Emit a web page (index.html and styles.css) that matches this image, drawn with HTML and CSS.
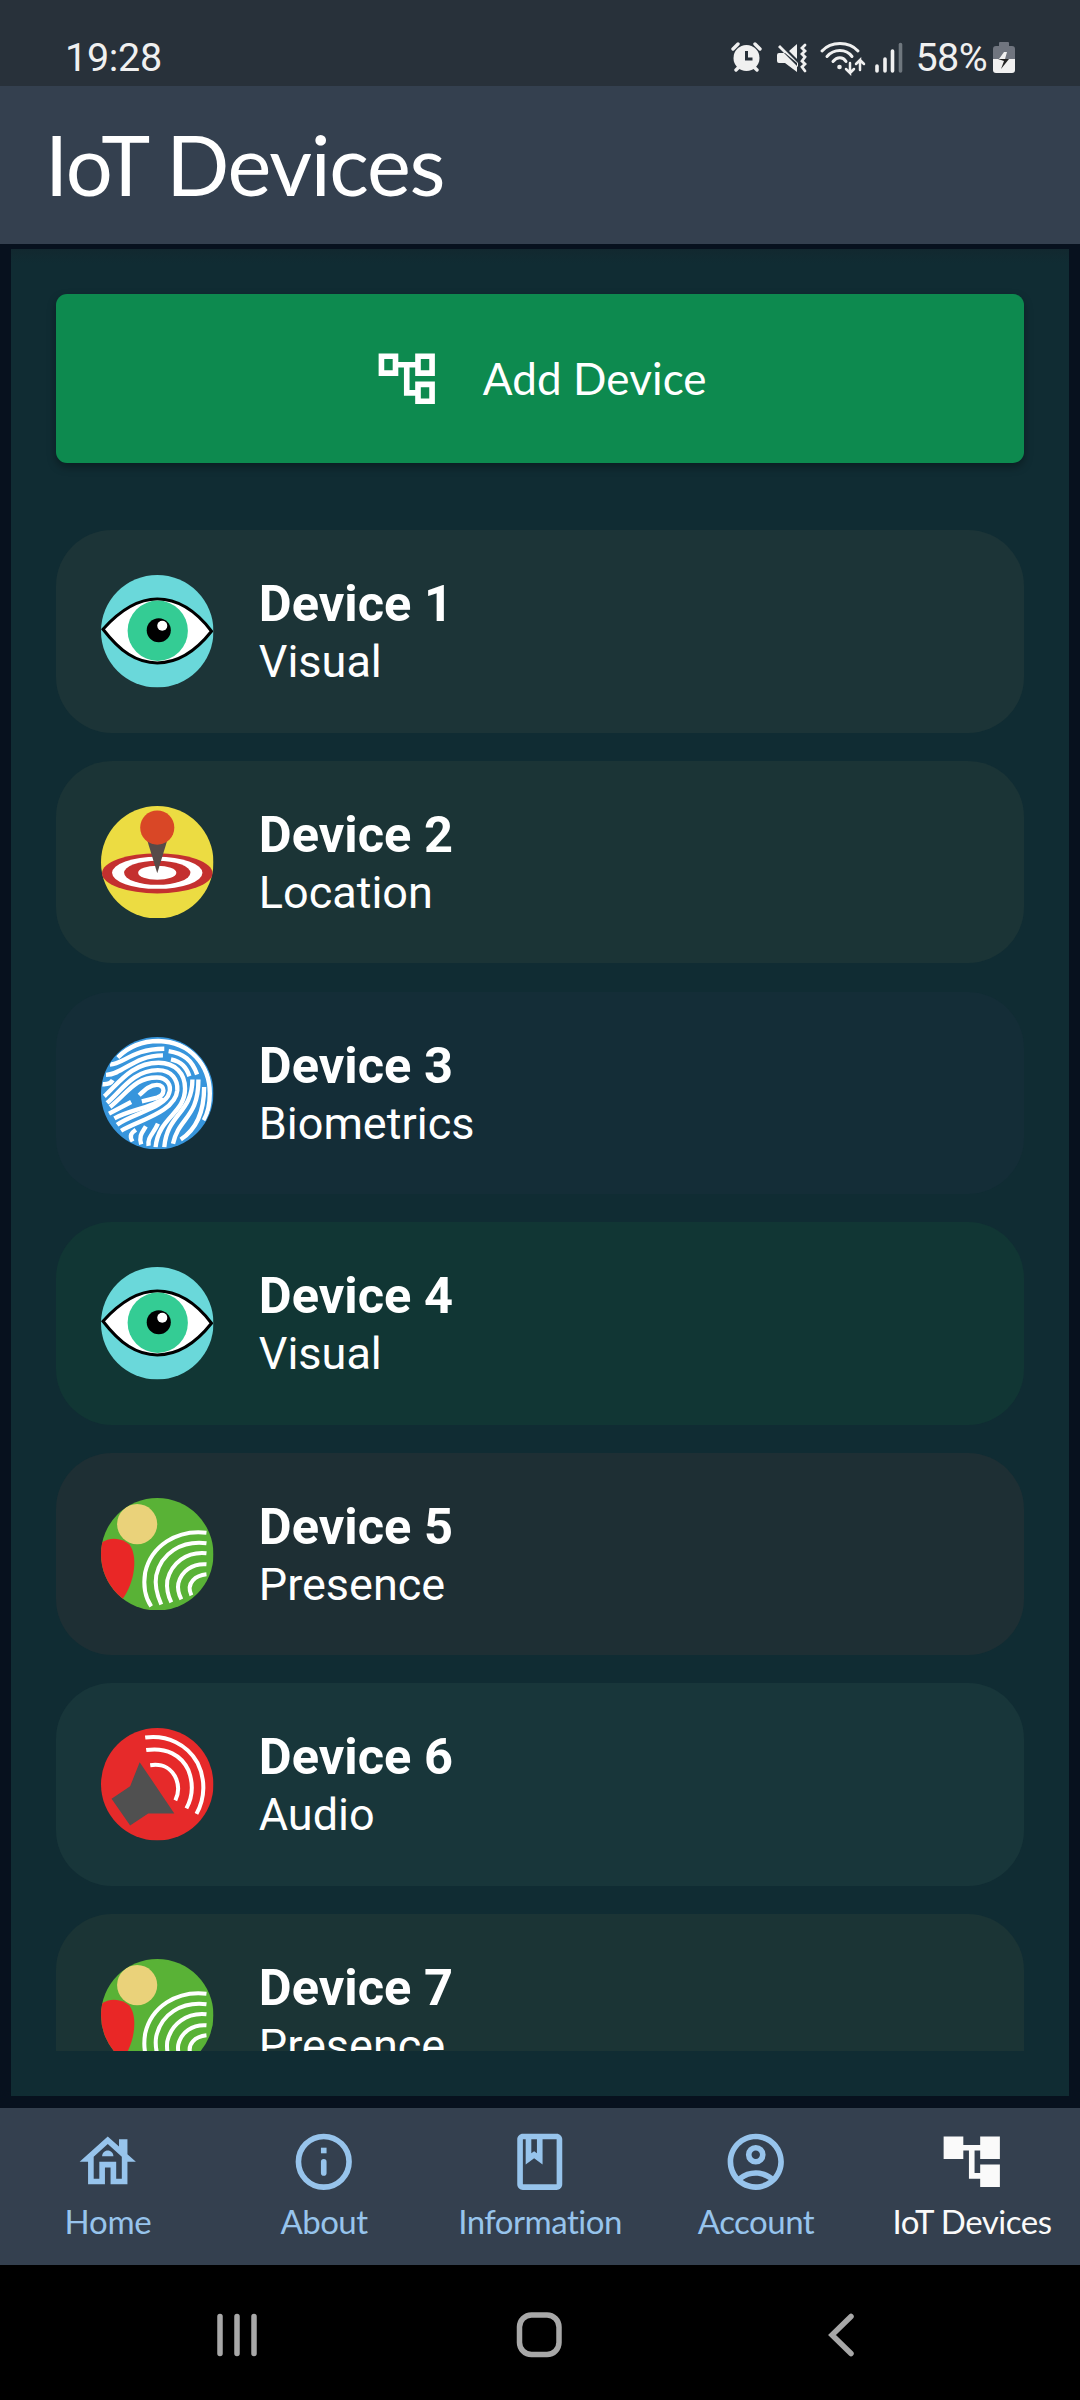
FILE: index.html
```html
<!DOCTYPE html>
<html lang="en">
<head>
<meta charset="utf-8">
<title>IoT Devices</title>
<link rel="stylesheet" href="styles.css">
</head>
<body>
<svg class="defs" aria-hidden="true">
  <defs>
    <clipPath id="disc"><circle cx="56" cy="56" r="56"/></clipPath>
    <clipPath id="print"><circle cx="186" cy="189" r="166"/></clipPath>
    <symbol id="eye" viewBox="0 0 112 112">
      <circle cx="56" cy="56" r="56" fill="#6ad8da"/>
      <path d="M2 54C21 33 38 24 56 24c20 0 38 11 54 32C95 75 77 87.500 56 87.500S19 76 2 54z" fill="#fff" stroke="#000" stroke-width="3"/>
      <circle cx="56.500" cy="55.500" r="30" fill="#34cc94"/>
      <circle cx="57.500" cy="55" r="12" fill="#000"/>
      <circle cx="61" cy="50.500" r="5" fill="#fff"/>
    </symbol>
    <symbol id="pin" viewBox="0 0 112 112">
      <circle cx="56" cy="56" r="56" fill="#ecdc42"/>
      <ellipse cx="56" cy="67" rx="55" ry="20" fill="#c4302f"/>
      <ellipse cx="56" cy="66.500" rx="45" ry="16" fill="#fff"/>
      <ellipse cx="56" cy="66.500" rx="33" ry="12" fill="#c4302f"/>
      <ellipse cx="56" cy="66.500" rx="19" ry="7" fill="#fff"/>
      <path d="M46 34l10 33 10-33z" fill="#574b49"/>
      <circle cx="56" cy="21.500" r="17" fill="#d94726"/>
    </symbol>
    <symbol id="finger" viewBox="18 21 336 336">
      <circle cx="186" cy="189" r="168" fill="#3795dc"/>
      <g clip-path="url(#print)" fill="none" stroke="#fff" stroke-width="13">
        <path d="M68 82C100 50 145 33 190 33C285 36 343 105 343 190C343 225 336 250 325 270"/>
        <path d="M45 103C85 103 110 56 207 56M33 134C85 133 115 76 203 76"/>
        <path d="M220 63C265 70 290 90 305 133M227 88C258 95 272 110 282 138"/>
        <path d="M22 162Q45 164 53 150"/>
        <path d="M28 198C70 160 110 98 190 98C240 98 269 130 269 175C269 250 190 260 181 350"/>
        <path d="M36 218C80 180 115 120 188 120C230 120 248 150 246 180C240 245 130 270 78 301"/>
        <path d="M45 230C100 185 120 142 185 142C215 142 229 165 222 187C212 232 110 250 66 283"/>
        <path d="M42 250L108 215M58 264C100 240 170 232 204 205"/>
        <path d="M132 195C150 178 165 164 185 164C212 164 210 195 185 202L140 213"/>
        <path d="M291 148C291 250 215 250 207 350M309 148C309 265 250 260 233 340M326 170C326 240 305 295 256 327"/>
        <path d="M112 333C102 315 108 308 122 298M138 342C130 315 142 305 152 288M160 346C156 320 175 310 188 280"/>
      </g>
    </symbol>
    <symbol id="presence" viewBox="0 0 112 112">
      <circle cx="56" cy="56" r="56" fill="#59b236"/>
      <g clip-path="url(#disc)">
        <path d="M0 45C9 38 21 40 28 46c9 11 6 38-7 55H0z" fill="#e92726"/>
        <circle cx="36" cy="26" r="20" fill="#ead27a"/>
      </g>
      <path d="M105 34.500C75 31 50 48 44 74c-2 12 0 25 6 34M105 45C80 42 60 55 55 77c-2 11 1 20 5 29M105 55C85 53 70 65 66 82c-1 8 0 14 4 22M105 66C91 65 80 73 77 85c-1 5 0 10 3 16M105 76C95 77 84 84 90 97" fill="none" stroke="#fff" stroke-width="4"/>
    </symbol>
    <symbol id="audio" viewBox="0 0 112 112">
      <circle cx="56" cy="56" r="56" fill="#e62a2a"/>
      <path d="M38.500 34L73 85H47L29 97 10.500 70.500 29 58z" fill="#505050"/>
      <path d="M44 9.500c22-3 42 7 52 25 8 16 8 35-1 51M45 22c20-3 35 5 42 20 5 13 4 27-2 38M49 37c13-2 22 4 26 14 3 8 2 15-1 21" fill="none" stroke="#fff" stroke-width="4"/>
    </symbol>
  </defs>
</svg>
<div class="screen">
  <header class="status">
    <span class="clock">19:28</span>
    <svg class="status-icons" viewBox="0 0 175 40" fill="#f0f0f0">
      <g transform="translate(0 1)">
        <circle cx="15.500" cy="18" r="13"/>
        <path d="M2 9l5-5M29 9l-5-5M5 30l3-3M26 30l-3-3" stroke="#f0f0f0" stroke-width="3.400" stroke-linecap="round"/>
        <path d="M15.500 11v8h6" fill="none" stroke="#28313a" stroke-width="3"/>
      </g>
      <path d="M48 14q-2 0-2 2v6q0 2 2 2h6l12 9V24L54 14zM47 8l2-2 18 18v4zM58 12l8-7v15z"/>
      <path d="M74 6l-3 3 3 3-3 3 3 3-3 4 3 3-3 3 3 4" fill="none" stroke="#f0f0f0" stroke-width="2.800" stroke-linecap="round"/>
      <g fill="none" stroke="#f0f0f0" stroke-width="3" stroke-linecap="round">
        <path d="M91 12c9-10 27-10 36 0M96 17.500c7-8 19-8 25 0M102 22.500c4-5 10-5 13 0"/>
        <path d="M119 24v10l-4-4M119 34l4-4M129 31V21l-4 4M129 21l4 4" stroke-width="2.500"/>
        <path d="M146 27v5M154 20v12M161.500 12v20" stroke-width="3.600"/>
        <path d="M169.500 5.500V32" stroke-width="3.600" stroke="#6f777e"/>
      </g>
      <circle cx="108.500" cy="28" r="2.300"/>
    </svg>
    <span class="percent">58%</span>
    <svg class="battery" viewBox="0 0 22 32">
      <path d="M6 1q0-1 1-1h8q1 0 1 1v3h3q3 0 3 3v10H0V7q0-3 3-3h3z" fill="#70757f"/>
      <path d="M0 17h22v11q0 3-3 3H3q-3 0-3-3z" fill="#f0f0f0"/>
      <path d="M11 10h3l-2 7H6z" fill="#f0f0f0"/>
      <path d="M5 17h11l-8 10 3-8z" fill="#222"/>
    </svg>
  </header>
  <h1 class="appbar"><span>IoT Devices</span></h1>
  <main class="panel">
    <button class="add">
      <svg class="icon" viewBox="0 0 24 24"><path fill-rule="evenodd" d="M22 11V3h-7v3H9V3H2v8h7V8h2v10h4v3h7v-8h-7v3h-2V8h2v3h7zM7 9H4V5h3v4zm10 6h3v4h-3v-4zm0-10h3v4h-3V5z"/></svg>
      <span>Add Device</span>
    </button>
    <ul class="list">
      <li class="card c1"><svg class="avatar"><use href="#eye"/></svg><div class="label"><h2>Device 1</h2><p>Visual</p></div></li>
      <li class="card c2"><svg class="avatar"><use href="#pin"/></svg><div class="label"><h2>Device 2</h2><p>Location</p></div></li>
      <li class="card c3"><svg class="avatar"><use href="#finger"/></svg><div class="label"><h2>Device 3</h2><p>Biometrics</p></div></li>
      <li class="card c4"><svg class="avatar"><use href="#eye"/></svg><div class="label"><h2>Device 4</h2><p>Visual</p></div></li>
      <li class="card c5"><svg class="avatar"><use href="#presence"/></svg><div class="label"><h2>Device 5</h2><p>Presence</p></div></li>
      <li class="card c6"><svg class="avatar"><use href="#audio"/></svg><div class="label"><h2>Device 6</h2><p>Audio</p></div></li>
      <li class="card c7"><svg class="avatar"><use href="#presence"/></svg><div class="label"><h2>Device 7</h2><p>Presence</p></div></li>
    </ul>
  </main>
  <nav class="tabs">
    <a class="tab home"><svg class="icon" viewBox="0 0 24 24"><path fill-rule="evenodd" d="M19 9.300V4h-3v2.600L12 3 2 12h3v8h6v-6h2v6h6v-8h3zM17 18h-2v-6H9v6H7v-7.810l5-4.500 5 4.500z"/><path d="M10 10h4c0-1.100-.9-2-2-2s-2 .9-2 2z"/></svg><span>Home</span></a>
    <a class="tab about"><svg class="icon" viewBox="0 0 24 24"><circle cx="12" cy="12" r="9" fill="none" stroke="currentColor" stroke-width="2"/><path d="M11 7h2v2h-2z"/><rect x="11" y="11" width="2" height="6" rx="1"/></svg><span>About</span></a>
    <a class="tab information"><svg class="icon" viewBox="0 0 24 24"><path fill-rule="evenodd" d="M18 2H6c-1.100 0-2 .9-2 2v16c0 1.100.9 2 2 2h12c1.100 0 2-.9 2-2V4c0-1.100-.9-2-2-2zM9 4h2v5l-1-.75L9 9zm9 16H6V4h1v9l3-2.250L13 13V4h5z"/></svg><span>Information</span></a>
    <a class="tab account"><svg class="icon" viewBox="0 0 24 24"><path fill-rule="evenodd" d="M12 2C6.480 2 2 6.480 2 12s4.480 10 10 10 10-4.480 10-10S17.520 2 12 2zM7.350 18.500C8.660 17.560 10.260 17 12 17s3.340.56 4.650 1.500c-1.310.94-2.910 1.500-4.650 1.500s-3.340-.56-4.650-1.500zm10.790-1.380C16.450 15.800 14.320 15 12 15s-4.450.8-6.140 2.120C4.700 15.730 4 13.950 4 12c0-4.420 3.580-8 8-8s8 3.580 8 8c0 1.950-.7 3.730-1.860 5.120z"/><circle cx="12" cy="9.500" r="2.500" fill="none" stroke="currentColor" stroke-width="2"/></svg><span>Account</span></a>
    <a class="tab devices"><svg class="icon" viewBox="0 0 24 24"><path d="M22 11V3h-7v3H9V3H2v8h7V8h2v10h4v3h7v-8h-7v3h-2V8h2v3z"/></svg><span>IoT Devices</span></a>
  </nav>
  <footer class="system">
    <svg viewBox="0 0 1080 135" fill="none" stroke="#a8a8a8" stroke-width="5.500" stroke-linecap="round">
      <path d="M220 51.500v37M237 51.500v37M254 51.500v37"/>
      <rect x="519.500" y="50" width="39.500" height="39.500" rx="12"/>
      <path d="M851 51.500l-19 18.500L851 88.500"/>
    </svg>
  </footer>
</div>
</body>
</html>
```
FILE: styles.css
```css
* { box-sizing: border-box; margin: 0; padding: 0; }
body { background: #07111e; color: #fff; font-family: Roboto, sans-serif; }
.defs { display: block; width: 0; height: 0; }
.screen { width: 1080px; height: 2400px; display: flex; flex-direction: column; overflow: hidden; }

.status { height: 86px; flex: none; background: #28313a; color: #f0f0f0; display: flex; align-items: flex-start; padding: 38px 65px 0 65px; font-size: 39.500px; line-height: 40px; }
.clock { margin-right: auto; letter-spacing: -0.300px; }
.status-icons { width: 175px; height: 40px; margin-right: 9px; margin-top: 1px; }
.percent { letter-spacing: -0.600px; margin-right: 6px; }
.battery { width: 22px; height: 32px; margin-top: 4px; }

.appbar { height: 157.500px; flex: none; background: #34404f; padding: 0 0 2px 45px; display: flex; align-items: center; font: 400 83px/100px Lato, sans-serif; letter-spacing: -1.300px; }

.panel { flex: 1; min-height: 0; margin: 5.500px 11.250px 11.250px; padding: 45px; background: linear-gradient(#12282f, #102c33 14px); display: flex; flex-direction: column; gap: 67.500px; }
.add { height: 168.750px; flex: none; border: 0; border-radius: 11px; background: #0d8a4f; color: #fff; box-shadow: 0 4px 8px rgba(0, 0, 0, .35); display: flex; align-items: center; justify-content: center; gap: 42px; font: 400 44px/54px Lato, sans-serif; letter-spacing: 0.100px; }
.icon { width: 67.500px; height: 67.500px; fill: currentColor; display: block; flex: none; }

.list { flex: 1; min-height: 0; overflow: hidden; list-style: none; display: flex; flex-direction: column; gap: 28.150px; }
.card { height: 202.500px; flex: none; border-radius: 56px; padding: 0 45px; display: flex; align-items: center; gap: 45px; }
.avatar { width: 112.500px; height: 112.500px; display: block; flex: none; }
.label { padding-top: 1.500px; }
.card h2 { font-size: 50.600px; line-height: 60px; font-weight: 700; }
.card p { font-size: 45px; line-height: 56px; }
.c1 { background: #1c3437; }
.c2 { background: #1b3436; }
.c3 { background: #142d37; }
.c4 { background: #113634; }
.c5 { background: #1e2f34; }
.c6 { background: #18363a; }
.c7 { background: #1b3435; }

.tabs { height: 157.500px; flex: none; background: #34404f; color: #97c4ec; display: grid; grid-template-columns: repeat(5, 1fr); }
.tab { display: flex; flex-direction: column; align-items: center; padding-top: 20.500px; gap: 4px; font: 400 33px/42px Lato, sans-serif; letter-spacing: -0.500px; white-space: nowrap; }
.home { letter-spacing: -0.200px; }
.devices { color: #fafafa; }

.system { height: 135px; flex: none; background: #000; }
.system svg { display: block; width: 1080px; height: 135px; }
```
